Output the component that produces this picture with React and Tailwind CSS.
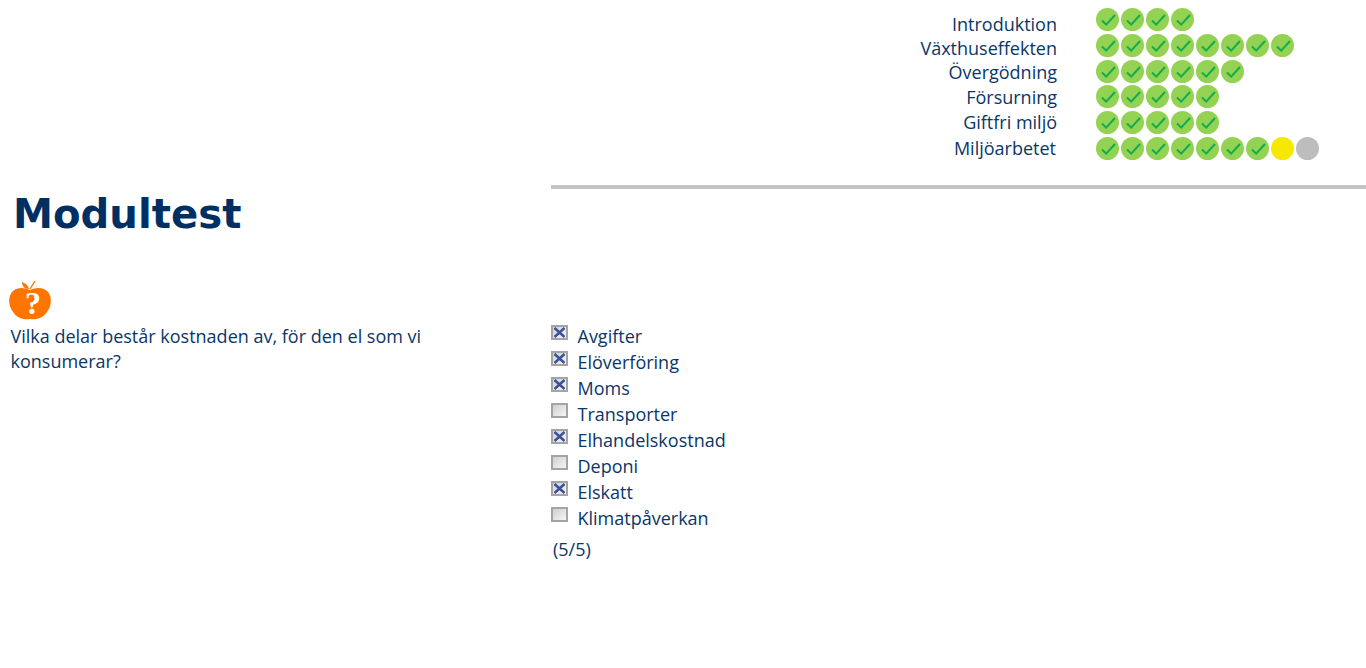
import React from 'react'

const rows = [
  { label: 'Introduktion', done: 4, top: 'mt-[12px]', dotTop: 'mt-0' },
  { label: 'Växthuseffekten', done: 8, top: 'mt-0', dotTop: 'mt-[3px]' },
  { label: 'Övergödning', done: 6, top: 'mt-0', dotTop: 'mt-[3px]' },
  { label: 'Försurning', done: 5, top: 'mt-[1px]', dotTop: 'mt-[2px]' },
  { label: 'Giftfri miljö', done: 5, top: 'mt-[1px]', dotTop: 'mt-[3px]' },
  { label: 'Miljöarbetet', done: 7, extra: true, top: 'mt-[2px]', pad: 'pr-[1px]', dotTop: 'mt-[3px]' },
]

const answers = [
  ['Avgifter', true],
  ['Elöverföring', true],
  ['Moms', true],
  ['Transporter', false],
  ['Elhandelskostnad', true],
  ['Deponi', false],
  ['Elskatt', true],
  ['Klimatpåverkan', false],
]

function Dot({ children, className }) {
  return <div className={'w-[23px] h-[23px] rounded-full ' + className}>{children}</div>
}

function DoneDot() {
  return (
    <Dot className="bg-[#93d252]">
      <svg viewBox="0 0 23 23" className="w-[23px] h-[23px]">
        <path d="M6 12.5 L10.2 16.6 L19 7" fill="none" stroke="#10ad4e" strokeWidth="2" />
      </svg>
    </Dot>
  )
}

function Box({ checked }) {
  return (
    <div className="w-[17px] h-[15px] mt-[2px] shrink-0 border-2 border-[#a4a4a4] bg-gradient-to-br from-[#d0d0d0] to-[#f6f6f6]">
      {checked && (
        <svg viewBox="0 0 13 11" className="w-[13px] h-[11px]">
          <path d="M1.5 1 L11.5 10 M11.5 1 L1.5 10" stroke="#3a4f9f" strokeWidth="2.4" />
        </svg>
      )}
    </div>
  )
}

function Apple() {
  return (
    <div className="relative w-[42px] h-[39px] ml-[9px]">
      <svg viewBox="0 0 42 39" className="w-[42px] h-[39px]">
        <path d="M20 8 C19 4 16 2 13 1 C13 5 15 8 20 8 Z" fill="#ff7500" />
        <path d="M21 8 L26 0" stroke="#ff7500" strokeWidth="1.4" />
        <path d="M21 9 C27 6 35 6 39 11 C43 16 43 24 38 31 C34 37 28 39 21 38 C14 39 8 37 4 31 C-1 24 -1 16 3 11 C7 6 15 6 21 9 Z" fill="#ff7500" />
      </svg>
      <span className="absolute left-[16px] top-[6px] text-[32px] leading-[33px] font-bold text-white font-['Liberation_Serif',serif]">?</span>
    </div>
  )
}

export default function App() {
  return (
    <div className="w-[1366px] h-[668px] bg-white text-[#0a3668] font-['Open_Sans',sans-serif] text-[18px] overflow-hidden">
      <div className="h-[185px] flex">
        <div className="w-[1057px] flex flex-col items-end">
          {rows.map((r) => (
            <div key={r.label} className={'leading-[24px] ' + r.top + ' ' + (r.pad || '')}>{r.label}</div>
          ))}
        </div>
        <div className="ml-[39px] pt-[8px] flex flex-col">
          {rows.map((r) => (
            <div key={r.label} className={'flex gap-[2px] ' + r.dotTop}>
              {Array.from({ length: r.done }).map((_, i) => <DoneDot key={i} />)}
              {r.extra && <Dot className="bg-[#f6e800]" />}
              {r.extra && <Dot className="bg-[#bdbdbd]" />}
            </div>
          ))}
        </div>
      </div>
      <div className="h-[4px] ml-[551px] bg-[#c4c4c4]" />
      <h1 className="ml-[13px] text-[40.2px] leading-[50px] font-bold text-[#003063] font-['DejaVu_Sans',sans-serif]">Modultest</h1>
      <div className="mt-[42px]">
        <Apple />
      </div>
      <div className="grid grid-cols-[551px_1fr] mt-[3px]">
        <p className="pl-[10.5px] pt-[1px] w-[450px] leading-[25px]">Vilka delar består kostnaden av, för den el som vi konsumerar?</p>
        <div>
          {answers.map(([text, checked]) => (
            <div key={text} className="flex h-[26px] leading-[26px]">
              <Box checked={checked} />
              <span className="ml-[9.5px]">{text}</span>
            </div>
          ))}
          <div className="ml-[2px] mt-[5px] leading-[26px]">(5/5)</div>
        </div>
      </div>
    </div>
  )
}
